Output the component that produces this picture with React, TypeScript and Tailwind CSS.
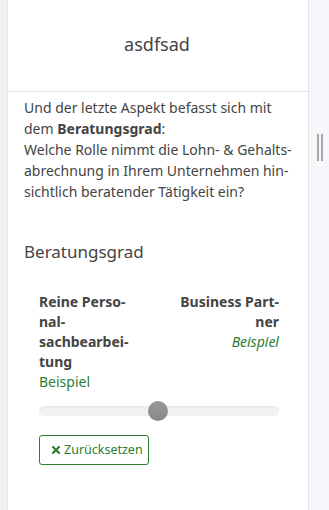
const App = () => {
  return (
    <div
      className="flex h-[510px] w-[329px] overflow-hidden bg-white text-[#444]"
      style={{ fontFamily: '"Noto Sans", "Open Sans", sans-serif' }}
      lang="de"
    >
      <div className="w-[8px] shrink-0 border-r border-[#e6e6e6] bg-[#f2f2f2]" />

      <div className="flex w-[301px] shrink-0 flex-col border-r border-[#e3e3e3] bg-white">
        <div className="flex h-[92px] shrink-0 items-center justify-center border-b border-[#e3e3e3] pb-[2px] pr-[2px] text-[18px]">
          asdfsad
        </div>

        <div className="flex-1 px-4 pt-[5px]">
          <p className="text-[14px] leading-[21px]">
            Und der letzte Aspekt befasst sich mit dem{" "}
            <b className="font-bold">Beratungsgrad</b>:
            <br />
            Welche Rolle nimmt die Lohn- &amp; Gehalts{"\u00AD"}abrechnung in Ihrem
            Unternehmen hin{"\u00AD"}sichtlich beratender Tätigkeit ein?
          </p>

          <h3 className="mt-[38px] text-[17px] leading-[24px]">Beratungsgrad</h3>

          <div className="mt-[28px] pl-[15px] pr-[13px]">
            <div className="flex justify-between text-[14px] leading-[20px]">
              <div className="w-[43%]">
                <div className="font-bold">
                  Reine Perso{"\u00AD"}nal{"\u00AD"}sachbearbei{"\u00AD"}tung
                </div>
                <div className="text-[#2e7d32]">Beispiel</div>
              </div>
              <div className="w-[43%] text-right">
                <div className="font-bold">Business Part{"\u00AD"}ner</div>
                <div className="italic text-[#2e7d32]">Beispiel</div>
              </div>
            </div>

            <div className="relative mt-[14px] h-[10px] rounded-full bg-[#f1f1f1] shadow-[inset_0_1px_1px_rgba(0,0,0,0.05)]">
              <div className="absolute left-[109px] top-[-5px] h-[20px] w-[20px] rounded-full bg-gradient-to-b from-[#999] to-[#888]" />
            </div>

            <button className="mt-[19px] flex h-[30px] w-[110px] items-center gap-[4px] rounded-[3px] border border-[#2e7d32] pl-[12px] text-[12.5px] text-[#2e7d32]">
              <svg width="8" height="8" viewBox="0 0 8 8" className="shrink-0">
                <path d="M1 1 L7 7 M7 1 L1 7" stroke="#2e7d32" strokeWidth="2.2" strokeLinecap="square" />
              </svg>
              Zurücksetzen
            </button>
          </div>
        </div>
      </div>

      <div className="relative flex-1 bg-[#f6f7fb]">
        <div className="absolute left-[8px] top-[134px] flex gap-[2px]">
          <div className="h-[27px] w-[2px] bg-[#a8a8a8]" />
          <div className="h-[27px] w-[2px] bg-[#a8a8a8]" />
        </div>
      </div>
    </div>
  );
};

export default App;
